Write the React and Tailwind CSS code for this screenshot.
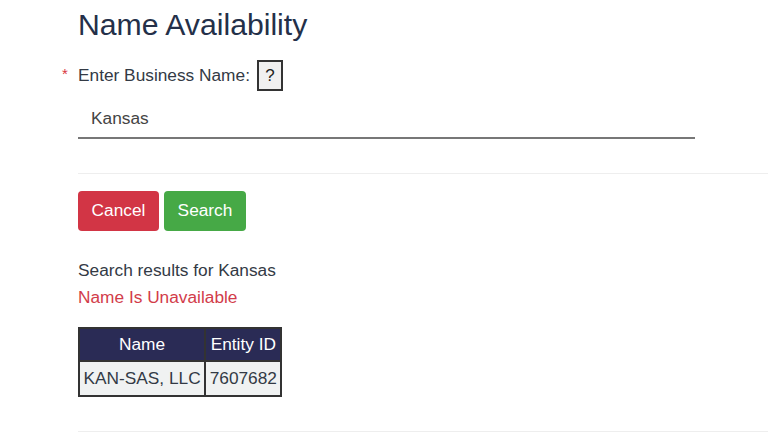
import React from "react";

export default function App() {
  return (
    <div className="w-[768px] h-[444px] overflow-hidden bg-white font-['Liberation_Sans',Arial,sans-serif] text-[#333]">
      <div className="pl-[78px] pt-[5px]">
        <h1 className="text-[30.2px] leading-[40px] text-[#243049]">Name Availability</h1>

        <div className="relative mt-[15px] flex items-center h-[31px]">
          <span className="absolute left-[-16px] top-[3px] text-[#d9363e] text-[15px]">*</span>
          <span className="text-[17.3px] text-[#333a45]">Enter Business Name:</span>
          <span className="ml-[7px] w-[26px] h-[31px] flex items-center justify-center border-2 border-[#333] bg-[#f0f0f0] text-[17px] text-[#222]">?</span>
        </div>

        <div className="w-[617px] mt-[10px] h-[38px] border-b-2 border-[#777] flex items-center pl-[13px] text-[17.3px] text-[#444]">
          Kansas
        </div>

        <div className="mt-[34px] border-t border-[#eeeeee]" />

        <div className="mt-[17px] flex gap-[5px]">
          <button className="w-[81px] h-[40px] rounded-[4px] bg-[#d23545] text-white text-[17.3px]">Cancel</button>
          <button className="w-[82px] h-[40px] rounded-[4px] bg-[#46a946] text-white text-[17.3px]">Search</button>
        </div>

        <p className="mt-[28px] text-[17.3px] leading-[22px] text-[#333a45]">Search results for Kansas</p>
        <p className="mt-[5px] text-[17.3px] leading-[22px] text-[#d23c4a]">Name Is Unavailable</p>

        <table className="mt-[19px] border-collapse border-2 border-[#333] text-[17.3px]">
          <thead>
            <tr className="bg-[#2a2b55] text-white h-[33px]">
              <th className="border-2 border-[#333] font-normal px-[3.5px]">Name</th>
              <th className="border-2 border-[#333] font-normal px-[3.5px]">Entity ID</th>
            </tr>
          </thead>
          <tbody>
            <tr className="bg-[#f0f2f2] text-[#333a45] h-[35px]">
              <td className="border-2 border-[#333] px-[3.5px]">KAN-SAS, LLC</td>
              <td className="border-2 border-[#333] px-[3.5px]">7607682</td>
            </tr>
          </tbody>
        </table>

        <div className="mt-[34px] border-t border-[#eeeeee]" />
      </div>
    </div>
  );
}
